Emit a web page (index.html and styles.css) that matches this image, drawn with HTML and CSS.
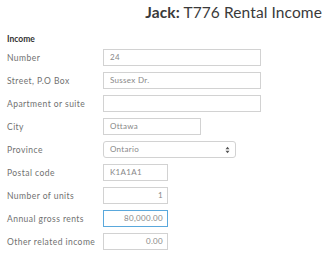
FILE: index.html
```html
<!DOCTYPE html>
<html>
<head>
<meta charset="utf-8">
<link rel="stylesheet" href="styles.css">
</head>
<body>
<div class="page">
  <h1 class="title"><b>Jack:</b> T776 Rental Income</h1>
  <h2 class="section">Income</h2>
  <div class="form">
    <div class="row"><span class="label">Number</span><div class="field w-long">24</div></div>
    <div class="row"><span class="label">Street, P.O Box</span><div class="field w-long">Sussex Dr.</div></div>
    <div class="row"><span class="label">Apartment or suite</span><div class="field w-long"></div></div>
    <div class="row"><span class="label">City</span><div class="field w-city">Ottawa</div></div>
    <div class="row"><span class="label">Province</span><div class="field select w-select">Ontario<svg class="arrows" width="5" height="8" viewBox="0 0 5 8"><path d="M0.5 3.2 L2.5 0.8 L4.5 3.2 Z M0.5 4.8 L2.5 7.2 L4.5 4.8 Z" fill="#555"/></svg></div></div>
    <div class="row"><span class="label">Postal code</span><div class="field w-short">K1A1A1</div></div>
    <div class="row"><span class="label">Number of units</span><div class="field w-short num">1</div></div>
    <div class="row"><span class="label">Annual gross rents</span><div class="field w-short num focus">80,000.00</div></div>
    <div class="row"><span class="label">Other related income</span><div class="field w-short num">0.00</div></div>
  </div>
</div>
</body>
</html>
```
FILE: styles.css
```css
html, body { margin: 0; padding: 0; background: #fff; }
body { font-family: Lato, "Open Sans", sans-serif; color: #333; }
.page { width: 333px; height: 254px; overflow: hidden; }
.title {
  margin: 0;
  padding: 3px 11px 0 0;
  text-align: right;
  font-size: 15.5px;
  font-weight: 400;
  line-height: 18px;
  letter-spacing: 0.1px;
  color: #3a3a3a;
}
.title b { font-weight: 700; }
.section {
  margin: 13px 0 0 7px;
  font-size: 8.5px;
  font-weight: 700;
  line-height: 10px;
  color: #333;
}
.form {
  display: flex;
  flex-direction: column;
  gap: 6px;
  margin-top: 5px;
  padding-left: 7px;
}
.row { display: flex; align-items: center; height: 17px; }
.label { width: 96px; font-size: 8.5px; color: #707070; letter-spacing: 0.45px; }
.field {
  box-sizing: border-box;
  height: 17px;
  border: 1px solid #d2d2d2;
  font-size: 8px;
  color: #888;
  line-height: 15px;
  letter-spacing: 0.3px;
  padding: 0 6px;
  white-space: nowrap;
}
.w-long { width: 158px; }
.w-city { width: 98px; }
.w-select { width: 133px; }
.w-short { width: 65px; }
.num { text-align: right; padding-right: 4px; }
.focus { border-color: #5aa8dc; }
.select {
  border-radius: 3px;
  display: flex;
  align-items: center;
  justify-content: space-between;
  padding-right: 5px;
}
.arrows { display: block; }
```
